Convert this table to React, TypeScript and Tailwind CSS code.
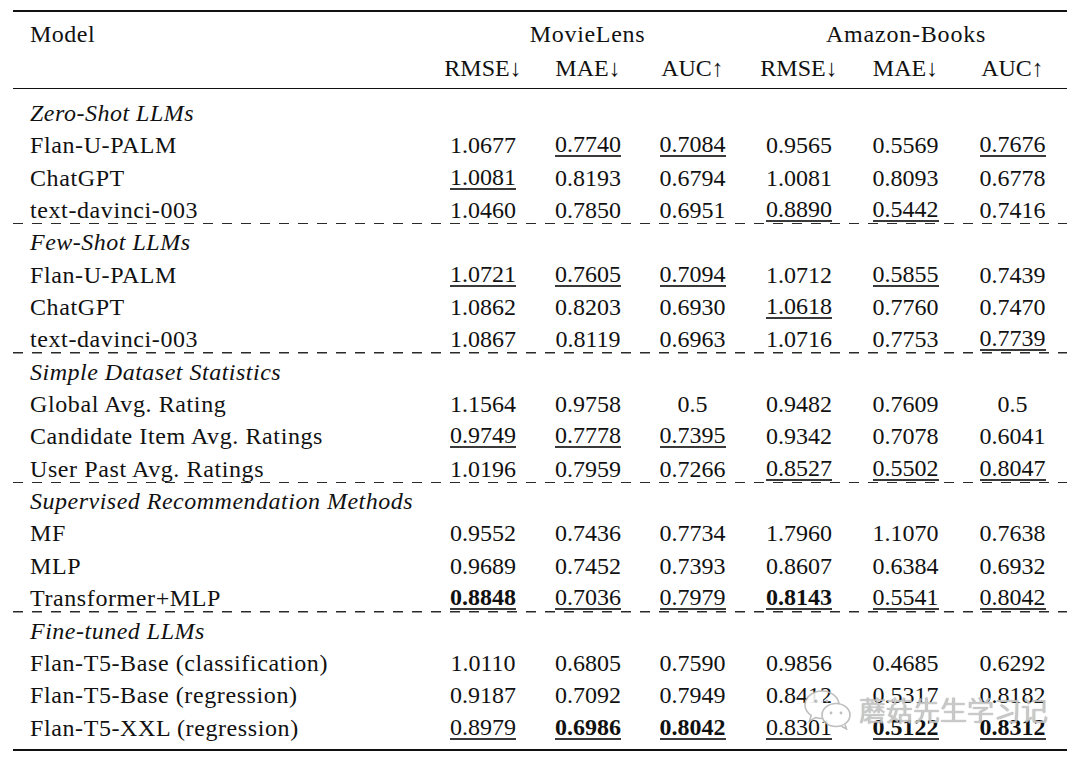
import React from "react";

type Row = { name: string; cells: string[] };
type Section = { title: string; rows: Row[] };

// "_" prefix = underlined (second best), "*" prefix = bold (best)
const sections: Section[] = [
  {
    title: "Zero-Shot LLMs",
    rows: [
      { name: "Flan-U-PALM", cells: ["1.0677", "_0.7740", "_0.7084", "0.9565", "0.5569", "_0.7676"] },
      { name: "ChatGPT", cells: ["_1.0081", "0.8193", "0.6794", "1.0081", "0.8093", "0.6778"] },
      { name: "text-davinci-003", cells: ["1.0460", "0.7850", "0.6951", "_0.8890", "_0.5442", "0.7416"] },
    ],
  },
  {
    title: "Few-Shot LLMs",
    rows: [
      { name: "Flan-U-PALM", cells: ["_1.0721", "_0.7605", "_0.7094", "1.0712", "_0.5855", "0.7439"] },
      { name: "ChatGPT", cells: ["1.0862", "0.8203", "0.6930", "_1.0618", "0.7760", "0.7470"] },
      { name: "text-davinci-003", cells: ["1.0867", "0.8119", "0.6963", "1.0716", "0.7753", "_0.7739"] },
    ],
  },
  {
    title: "Simple Dataset Statistics",
    rows: [
      { name: "Global Avg. Rating", cells: ["1.1564", "0.9758", "0.5", "0.9482", "0.7609", "0.5"] },
      { name: "Candidate Item Avg. Ratings", cells: ["_0.9749", "_0.7778", "_0.7395", "0.9342", "0.7078", "0.6041"] },
      { name: "User Past Avg. Ratings", cells: ["1.0196", "0.7959", "0.7266", "_0.8527", "_0.5502", "_0.8047"] },
    ],
  },
  {
    title: "Supervised Recommendation Methods",
    rows: [
      { name: "MF", cells: ["0.9552", "0.7436", "0.7734", "1.7960", "1.1070", "0.7638"] },
      { name: "MLP", cells: ["0.9689", "0.7452", "0.7393", "0.8607", "0.6384", "0.6932"] },
      { name: "Transformer+MLP", cells: ["*_0.8848", "_0.7036", "_0.7979", "*_0.8143", "_0.5541", "_0.8042"] },
    ],
  },
  {
    title: "Fine-tuned LLMs",
    rows: [
      { name: "Flan-T5-Base (classification)", cells: ["1.0110", "0.6805", "0.7590", "0.9856", "0.4685", "0.6292"] },
      { name: "Flan-T5-Base (regression)", cells: ["0.9187", "0.7092", "0.7949", "0.8412", "0.5317", "0.8182"] },
      { name: "Flan-T5-XXL (regression)", cells: ["_0.8979", "*_0.6986", "*_0.8042", "_0.8301", "*_0.5122", "*_0.8312"] },
    ],
  },
];

const gridCols = "grid grid-cols-[417px_106px_104px_105px_108px_105px_109px]";

function Cell({ raw }: { raw: string }) {
  let v = raw;
  const bold = v.startsWith("*");
  if (bold) v = v.slice(1);
  const under = v.startsWith("_");
  if (under) v = v.slice(1);
  return (
    <div className="flex items-center justify-center">
      <span
        className={
          (under ? "inline-block border-b-2 border-[#3a3a3a] leading-[22px] " : "") +
          (bold ? "font-bold" : "")
        }
      >
        {v}
      </span>
    </div>
  );
}

function WeChatMark() {
  return (
    <svg width="50" height="42" viewBox="0 0 50 42" fill="none" stroke="#b8b8b8" strokeWidth="1.6">
      <path d="M19 3C9.6 3 2 9.2 2 16.8c0 4.3 2.4 8.1 6.2 10.6L6.5 33l6.3-3.4c2 .6 4 .9 6.2.9 1 0 2-.1 3-.2" fill="#fff" />
      <path d="M19 3c9.4 0 17 6.2 17 13.8" />
      <ellipse cx="33" cy="27" rx="14" ry="11.5" fill="#fff" />
      <path d="M42 36.5l1.5 4.5-5-2.8" fill="#fff" />
      <circle cx="13" cy="13" r="1.6" fill="#b8b8b8" stroke="none" />
      <circle cx="24" cy="13" r="1.6" fill="#b8b8b8" stroke="none" />
      <circle cx="28" cy="25" r="1.4" fill="#b8b8b8" stroke="none" />
      <circle cx="38" cy="25" r="1.4" fill="#b8b8b8" stroke="none" />
    </svg>
  );
}

export default function App() {
  return (
    <div className="relative w-[1080px] h-[760px] bg-white text-[#111] font-['Liberation_Serif',serif] text-[24px] overflow-hidden">
      <div className="ml-[13px] w-[1054px] pt-[10px]">
        {/* top rule */}
        <div className="h-[2px] bg-[#111]" />

        {/* header */}
        <div className="pt-[4px] pb-[4px]">
          <div className={gridCols + " h-[34px] items-center"}>
            <div className="pl-[17px] tracking-[0.5px]">Model</div>
            <div className="col-span-3 text-center tracking-[0.7px]">MovieLens</div>
            <div className="col-span-3 text-center tracking-[0.8px]">Amazon-Books</div>
          </div>
          <div className={gridCols + " h-[34px] items-center"}>
            <div />
            {["RMSE↓", "MAE↓", "AUC↑", "RMSE↓", "MAE↓", "AUC↑"].map((h, i) => (
              <div key={i} className="text-center">
                {h}
              </div>
            ))}
          </div>
        </div>

        {/* mid rule */}
        <div className="h-px bg-[#111]" />

        {/* body */}
        <div className="pt-[6px] pb-[7px]">
          {sections.map((s, si) => (
            <div
              key={s.title}
              className={
                si < sections.length - 1
                  ? "bg-[repeating-linear-gradient(to_right,#2a2a2a_0_10px,transparent_10px_19px)] bg-no-repeat bg-bottom bg-[length:100%_1.5px]"
                  : ""
              }
            >
              <div className={gridCols + " h-[32.35px] items-center"}>
                <div className="pl-[17px] italic tracking-[0.5px] whitespace-nowrap">{s.title}</div>
              </div>
              {s.rows.map((r) => (
                <div key={r.name} className={gridCols + " h-[32.35px] items-center"}>
                  <div className="pl-[17px] whitespace-nowrap tracking-[0.6px]">{r.name}</div>
                  {r.cells.map((c, ci) => (
                    <Cell key={ci} raw={c} />
                  ))}
                </div>
              ))}
            </div>
          ))}
        </div>

        {/* bottom rule */}
        <div className="h-[2px] bg-[#111]" />
      </div>

      {/* watermark */}
      <div className="absolute left-[803px] top-[688px] flex items-center gap-[6px] opacity-90">
        <WeChatMark />
        <span className="font-['Noto_Sans_CJK_SC',sans-serif] text-[27px] leading-none text-[#c4c4c4] [text-shadow:0_0_1px_#888]">
          蘑菇先生学习记
        </span>
      </div>
    </div>
  );
}
